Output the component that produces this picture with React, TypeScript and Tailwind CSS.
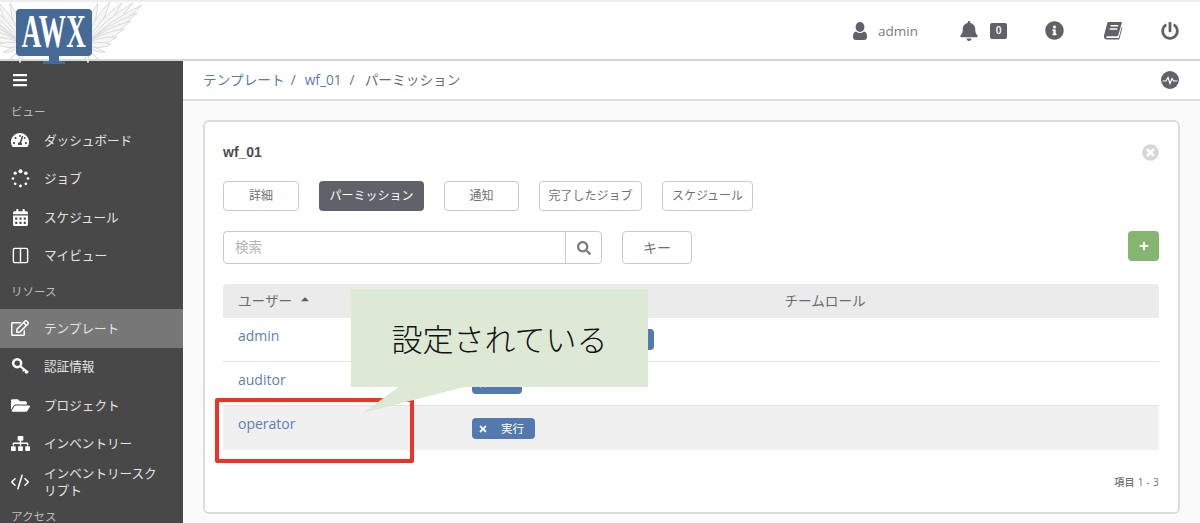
import React from "react";
import { CodeXml, Columns2 } from "lucide-react";
import {
  FaBars,
  FaBell,
  FaCalendarAlt,
  FaCaretUp,
  FaFolderOpen,
  FaInfoCircle,
  FaPlus,
  FaPowerOff,
  FaRegEdit,
  FaSearch,
  FaSitemap,
  FaTachometerAlt,
  FaTimes,
  FaTimesCircle,
} from "react-icons/fa";

const tips = [
  [98, 3],
  [110, 2],
  [122, 3],
  [133, 3],
  [142, 5],
  [137, 13],
  [131, 21],
  [124, 29],
  [117, 37],
  [111, 44],
  [105, 52],
  [98, 59],
  [88, 63],
];

const Wing = ({ className }: { className: string }) => (
  <svg viewBox="0 0 145 66" className={className} fill="#f6f6f6" stroke="#cdcdcd" strokeWidth="0.7">
    {tips.map(([x, y]) => {
      const mx = (84 + x) / 2;
      const my = (46 + y) / 2;
      return <path key={x} d={`M84 46 Q${mx - 5} ${my - 5} ${x} ${y} Q${mx + 5} ${my + 5} 84 46 Z`} />;
    })}
  </svg>
);

const Logo = () => (
  <div className="absolute left-0 top-0 w-[145px] h-[66px] z-10">
    <Wing className="absolute left-0 top-0 w-[145px] h-[66px]" />
    <Wing className="absolute left-[-37px] top-0 w-[145px] h-[66px] -scale-x-100" />
    <div className="absolute left-[16px] top-[9px] w-[76px] h-[47px] rounded-[4px] bg-[#456a97] flex items-center justify-center">
      <span className="font-['Liberation_Serif',serif] font-bold text-white text-[27px] leading-[47px] tracking-[0.5px] scale-y-[1.75]">
        AWX
      </span>
    </div>
    <div className="absolute left-[49px] top-[56px] w-[10px] h-[5px] bg-[#456a97]" />
    <div className="absolute left-[43px] top-[61px] w-[22px] h-[3px] bg-[#456a97]" />
  </div>
);

const SpinnerIcon = () => (
  <svg viewBox="0 0 20 20" className="w-[19px] h-[19px]" fill="currentColor">
    <circle cx="10" cy="2.3" r="2.1" />
    <circle cx="15.6" cy="4.4" r="1.9" />
    <circle cx="17.9" cy="10" r="1.4" />
    <circle cx="15.6" cy="15.6" r="1.4" />
    <circle cx="10" cy="17.9" r="1.5" />
    <circle cx="4.4" cy="15.6" r="1.4" />
    <circle cx="2.1" cy="10" r="1.4" />
    <circle cx="4.4" cy="4.4" r="1.7" />
  </svg>
);

const KeyIcon = () => (
  <svg viewBox="0 0 20 20" className="w-[19px] h-[19px]" fill="none" stroke="currentColor">
    <circle cx="6.5" cy="6.5" r="4.2" strokeWidth="2.6" />
    <path d="M9.8 9.8 L18 16.5 M14 13 L12.6 15 M16.6 15.2 L15.2 17.2" strokeWidth="2.2" />
  </svg>
);

const UserIcon = () => (
  <svg viewBox="0 0 14 18" className="w-[14px] h-[18px] mr-[11px]" fill="currentColor">
    <ellipse cx="7" cy="5" rx="4.4" ry="5" />
    <path d="M0 15 Q0 10 3 9.6 Q7 12.6 11 9.6 Q14 10 14 15 Q14 18 11 18 H3 Q0 18 0 15 Z" />
  </svg>
);

const BookIcon = () => (
  <svg viewBox="0 0 21 20" className="w-[20px] h-[19px] mr-[38px]">
    <path
      fill="#5f6268"
      d="M5.5 1 H19 Q20.2 1 19.8 2.2 L16 15 Q15.7 16 14.5 16 H4.5 Q3 16 3.4 17 Q3.7 18 5 18 H16.5 L19.6 6.5 L20.4 7 L17.2 19 Q17 19.6 16 19.6 H4 Q1.5 19.6 1 17 Q0.8 15.5 1.5 13.5 L4.5 2.2 Q4.8 1 5.5 1 Z"
    />
    <path d="M8 5 H16 M7 8.5 H15" stroke="#fff" strokeWidth="1.5" fill="none" />
  </svg>
);

const SectionLabel = ({ text, className }: { text: string; className: string }) => (
  <div className={`px-[11px] text-[11.5px] leading-none text-[#bdbdbd] flex items-center ${className}`}>{text}</div>
);

const NavItem = ({
  icon,
  children,
  active,
}: {
  icon: React.ReactNode;
  children: React.ReactNode;
  active?: boolean;
}) => (
  <div
    className={`h-[38.5px] shrink-0 flex items-center text-[12.6px] leading-[17px] text-[#e4e4e4] ${
      active ? "bg-[#777777]" : ""
    }`}
  >
    <div className="w-[40px] flex justify-center text-white shrink-0">{icon}</div>
    <div className="pl-[4px] pr-[20px]">{children}</div>
  </div>
);

const Sidebar = () => (
  <aside className="w-[183px] shrink-0 bg-[#484848] flex flex-col overflow-hidden">
    <div className="h-[38px] shrink-0 flex items-center pl-[12px] text-white">
      <FaBars size={16} />
    </div>
    <SectionLabel text="ビュー" className="h-[22px] shrink-0 pt-[3px]" />
    <NavItem icon={<FaTachometerAlt size={18} />}>ダッシュボード</NavItem>
    <NavItem icon={<SpinnerIcon />}>ジョブ</NavItem>
    <NavItem icon={<FaCalendarAlt size={17} />}>スケジュール</NavItem>
    <NavItem icon={<Columns2 size={19} strokeWidth={1.8} />}>マイビュー</NavItem>
    <SectionLabel text="リソース" className="h-[34px] shrink-0" />
    <NavItem active icon={<FaRegEdit size={18} />}>
      テンプレート
    </NavItem>
    <NavItem icon={<KeyIcon />}>認証情報</NavItem>
    <NavItem icon={<FaFolderOpen size={19} />}>プロジェクト</NavItem>
    <NavItem icon={<FaSitemap size={19} />}>インベントリー</NavItem>
    <NavItem icon={<CodeXml size={20} strokeWidth={1.8} />}>インベントリースクリプト</NavItem>
    <SectionLabel text="アクセス" className="h-[22px] shrink-0 pt-[8px]" />
  </aside>
);

const Header = () => (
  <header className="h-[61px] shrink-0 border-t-2 border-b-2 border-t-[#eeeeee] border-b-[#d7d7d7] bg-white flex items-center justify-end pr-[21px] text-[#5f6268]">
    <UserIcon />
    <span className="text-[13.5px] text-[#7a7c80] mr-[41px] pt-[1px]">admin</span>
    <FaBell size={20} className="mr-[11px]" />
    <span className="w-[17px] h-[16px] rounded-[2px] bg-[#5f6268] text-white text-[10px] font-semibold flex items-center justify-center mr-[38px]">
      0
    </span>
    <FaInfoCircle size={19} className="mr-[39px]" />
    <BookIcon />
    <FaPowerOff size={18} />
  </header>
);

const Pulse = () => (
  <svg viewBox="0 0 18 18" className="w-[18px] h-[18px]">
    <circle cx="9" cy="9" r="9" fill="#5f6268" />
    <path d="M1.5 10 H5 L7 6.5 L9 12.5 L11 7.5 L12.5 10 H16.5" fill="none" stroke="#fff" strokeWidth="1.2" />
  </svg>
);

const Breadcrumb = () => (
  <div className="h-[40px] shrink-0 bg-white border-b-2 border-[#dedede] flex items-center pl-[20px] pr-[21px] text-[13.7px]">
    <span className="text-[#5d7ba6]">テンプレート</span>
    <span className="text-[#707070] mx-[6px]">/</span>
    <span className="text-[#5d7ba6] ml-[3px]">wf_01</span>
    <span className="text-[#707070] mx-[8px]">/</span>
    <span className="text-[#6b6b6b] ml-[2px]">パーミッション</span>
    <div className="ml-auto">
      <Pulse />
    </div>
  </div>
);

const TabButton = ({ label, width, active }: { label: string; width: string; active?: boolean }) => (
  <div
    className={`h-[30px] rounded-[4px] flex items-center justify-center text-[12px] ${width} ${
      active ? "bg-[#5f6268] text-white" : "bg-white border border-[#c9c9c9] text-[#707070]"
    }`}
  >
    {label}
  </div>
);

const Badge = ({ label, className }: { label?: string; className: string }) => (
  <span className={`h-[21px] rounded-[4px] bg-[#5479ae] text-white flex items-center pl-[6px] text-[11.5px] ${className}`}>
    <FaTimes size={10} className="mr-[13px] shrink-0" />
    {label}
  </span>
);

const Row = ({ name, children, shaded }: { name: string; children: React.ReactNode; shaded?: boolean }) => (
  <div className={`h-[44px] flex border-b border-[#e3e3e3] ${shaded ? "bg-[#f0f0f0] border-b-0" : ""}`}>
    <div className="w-[249px] pl-[15px] pt-[8px] text-[14px] leading-[20px] text-[#5d7fb3]">{name}</div>
    <div className="flex items-start pt-[11px]">{children}</div>
  </div>
);

const Panel = () => (
  <section className="ml-[20px] mt-[19px] w-[977px] h-[394px] bg-white border-2 border-[#dcdcdc] rounded-[6px] pl-[18px] pr-[19px] pt-[18px] flex flex-col">
    <div className="flex items-center justify-between h-[24px]">
      <span className="font-['Liberation_Sans',sans-serif] font-bold text-[14px] text-[#4d4d4d]">wf_01</span>
      <FaTimesCircle size={17} className="text-[#d7d7d7]" />
    </div>
    <div className="flex mt-[17px] gap-[20px]">
      <TabButton label="詳細" width="w-[76px]" />
      <TabButton label="パーミッション" width="w-[105px]" active />
      <TabButton label="通知" width="w-[75px]" />
      <TabButton label="完了したジョブ" width="w-[103px]" />
      <TabButton label="スケジュール" width="w-[91px]" />
    </div>
    <div className="flex mt-[20px] items-start">
      <div className="w-[379px] h-[33px] rounded-[4px] border border-[#c9c9c9] flex items-center">
        <span className="flex-1 pl-[11px] text-[13.5px] text-[#b5b5b5]">検索</span>
        <div className="w-[36px] h-full border-l border-[#c9c9c9] flex items-center justify-center text-[#7d7d7d]">
          <FaSearch size={14} />
        </div>
      </div>
      <div className="ml-[20px] w-[70px] h-[33px] rounded-[4px] border border-[#c9c9c9] flex items-center justify-center text-[14px] text-[#6f6f6f]">
        キー
      </div>
      <div className="ml-auto w-[31px] h-[30px] rounded-[4px] bg-[#86b571] flex items-center justify-center text-white">
        <FaPlus size={10} />
      </div>
    </div>
    <div className="mt-[20px]">
      <div className="h-[34px] pt-[1px] bg-[#ebebeb] rounded-t-[4px] flex items-center text-[13.6px] text-[#6b6b6b]">
        <div className="w-[249px] pl-[15px] flex items-center">
          ユーザー
          <FaCaretUp size={12} className="ml-[7px] mb-[5px] text-[#5f5f5f]" />
        </div>
        <div className="flex-1 pl-[19px] text-center">チームロール</div>
      </div>
      <Row name="admin">
        <Badge className="w-[182px]" />
      </Row>
      <Row name="auditor">
        <Badge className="w-[50px]" />
      </Row>
      <Row name="operator" shaded>
        <Badge label="実行" className="w-[63px] mt-[1px]" />
      </Row>
    </div>
    <div className="mt-[25px] text-right text-[10px] font-medium text-[#6f6f6f] tracking-[0.3px]">項目 1 - 3</div>
  </section>
);

// annotation pasted over the screenshot
const Callout = () => (
  <>
    <div className="absolute left-[215px] top-[398px] w-[199px] h-[65px] border-[4px] border-[#ee3324] rounded-[2px]" />
    <div className="absolute left-[351px] top-[289px] w-[297px] h-[98px] bg-[#dde8d5] flex items-center justify-center text-[31px] font-['Noto_Sans_CJK_JP',sans-serif] font-light text-[#111111]">
      設定されている
    </div>
    <svg className="absolute left-[360px] top-[386px] w-[110px] h-[30px]" viewBox="0 0 110 30">
      <path d="M40 0 L3 27 L108 0 Z" fill="#dde8d5" />
    </svg>
  </>
);

export default function App() {
  return (
    <div className="relative w-[1200px] h-[523px] overflow-hidden bg-[#fafafa] flex flex-col font-['Open_Sans','Noto_Sans_CJK_JP',sans-serif]">
      <Header />
      <div className="flex flex-1 min-h-0">
        <Sidebar />
        <main className="flex-1 min-w-0 flex flex-col">
          <Breadcrumb />
          <Panel />
        </main>
      </div>
      <Logo />
      <Callout />
    </div>
  );
}
